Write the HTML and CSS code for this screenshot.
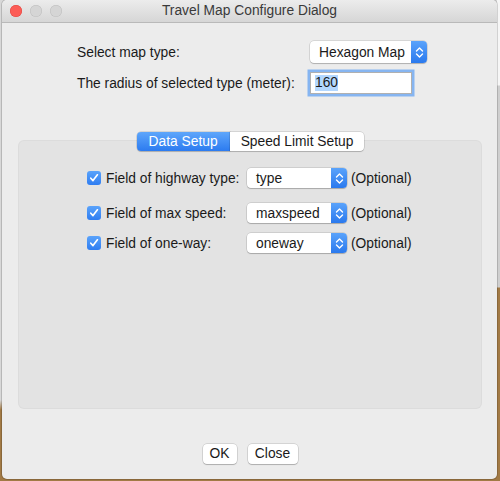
FILE: index.html
```html
<!DOCTYPE html>
<html>
<head>
<meta charset="utf-8">
<link rel="stylesheet" href="styles.css">
</head>
<body>
<div class="desk">
  <div class="window">
    <div class="titlebar">
      <div class="lights">
        <span class="light red"></span>
        <span class="light"></span>
        <span class="light"></span>
      </div>
      <div class="title">Travel Map Configure Dialog</div>
    </div>
    <div class="content">
      <div class="form">
        <div class="label">Select map type:</div>
        <div class="popup popup-map">
          <span class="popup-text">Hexagon Map</span>
          <span class="popup-arrow"><svg width="9" height="13" viewBox="0 0 9 13"><path d="M1.5 5 L4.5 2 L7.5 5 M1.5 8 L4.5 11 L7.5 8" fill="none" stroke="#fff" stroke-width="1.4" stroke-linecap="round" stroke-linejoin="round"/></svg></span>
        </div>
        <div class="label">The radius of selected type (meter):</div>
        <div class="input"><span class="sel">160</span></div>
      </div>

      <div class="tabarea">
        <div class="tabs">
          <div class="tab active">Data Setup</div>
          <div class="tab">Speed Limit Setup</div>
        </div>
        <div class="panel">
          <div class="row r1">
            <div class="check"><span class="box"><svg width="10" height="10" viewBox="0 0 10 10"><path d="M1.8 5.2 L4 7.6 L8.4 1.8" fill="none" stroke="#fff" stroke-width="1.7" stroke-linecap="round" stroke-linejoin="round"/></svg></span>Field of highway type:</div>
            <div class="popup popup-field">
              <span class="popup-text">type</span>
              <span class="popup-arrow"><svg width="9" height="13" viewBox="0 0 9 13"><path d="M1.5 5 L4.5 2 L7.5 5 M1.5 8 L4.5 11 L7.5 8" fill="none" stroke="#fff" stroke-width="1.4" stroke-linecap="round" stroke-linejoin="round"/></svg></span>
            </div>
            <div class="opt">(Optional)</div>
          </div>
          <div class="row r2">
            <div class="check"><span class="box"><svg width="10" height="10" viewBox="0 0 10 10"><path d="M1.8 5.2 L4 7.6 L8.4 1.8" fill="none" stroke="#fff" stroke-width="1.7" stroke-linecap="round" stroke-linejoin="round"/></svg></span>Field of max speed:</div>
            <div class="popup popup-field">
              <span class="popup-text">maxspeed</span>
              <span class="popup-arrow"><svg width="9" height="13" viewBox="0 0 9 13"><path d="M1.5 5 L4.5 2 L7.5 5 M1.5 8 L4.5 11 L7.5 8" fill="none" stroke="#fff" stroke-width="1.4" stroke-linecap="round" stroke-linejoin="round"/></svg></span>
            </div>
            <div class="opt">(Optional)</div>
          </div>
          <div class="row r3">
            <div class="check"><span class="box"><svg width="10" height="10" viewBox="0 0 10 10"><path d="M1.8 5.2 L4 7.6 L8.4 1.8" fill="none" stroke="#fff" stroke-width="1.7" stroke-linecap="round" stroke-linejoin="round"/></svg></span>Field of one-way:</div>
            <div class="popup popup-field">
              <span class="popup-text">oneway</span>
              <span class="popup-arrow"><svg width="9" height="13" viewBox="0 0 9 13"><path d="M1.5 5 L4.5 2 L7.5 5 M1.5 8 L4.5 11 L7.5 8" fill="none" stroke="#fff" stroke-width="1.4" stroke-linecap="round" stroke-linejoin="round"/></svg></span>
            </div>
            <div class="opt">(Optional)</div>
          </div>
        </div>
      </div>

      <div class="buttons">
        <div class="btn btn-ok">OK</div>
        <div class="btn btn-close">Close</div>
      </div>
    </div>
  </div>
</div>
</body>
</html>
```

FILE: styles.css
```css
html, body {
  margin: 0;
  padding: 0;
}
body {
  width: 500px;
  height: 481px;
  overflow: hidden;
  background:
    linear-gradient(to bottom, #f6f6f6 0px, #f6f6f6 85px, #cfcfcf 86px, #cfcfcf 287px, #a27a45 288px) right top / 3px 100% no-repeat,
    linear-gradient(to bottom, #d8d8d8 0px, #d8d8d8 400px, #a27a45 410px, #a27a45 481px);
  font-family: "Liberation Sans", Arial, sans-serif;
  font-size: 13.8px;
  color: #1a1a1a;
}
.desk {
  padding-left: 2px;
}
.window {
  width: 495px;
  height: 479px;
  background: #ececec;
  border-radius: 5px;
  overflow: hidden;
  display: flex;
  flex-direction: column;
  box-shadow: 0 0 0 1px rgba(0,0,0,0.15);
}
.titlebar {
  height: 22px;
  flex: none;
  background: linear-gradient(to bottom, #ececec, #d6d6d6);
  border-bottom: 1px solid #b9b9b9;
  display: flex;
  align-items: center;
  position: relative;
}
.lights {
  display: flex;
  gap: 8px;
  padding-left: 8px;
}
.light {
  width: 12px;
  height: 12px;
  border-radius: 50%;
  background: #d5d5d5;
  box-shadow: inset 0 0 0 0.5px #bdbdbd;
}
.light.red {
  background: #fc5c56;
  box-shadow: inset 0 0 0 0.5px #e0443e;
}
.title {
  position: absolute;
  left: 0;
  right: 0;
  text-align: center;
  font-size: 13.8px;
  color: #3a3a3a;
  top: 3px;
}
.content {
  flex: 1;
  display: flex;
  flex-direction: column;
}
.form {
  display: grid;
  grid-template-columns: 231px auto;
  row-gap: 9px;
  align-items: center;
  padding: 18px 0 0 75px;
}
.popup {
  height: 20px;
  background: #fff;
  border-radius: 4px;
  box-shadow: 0 0 0 0.5px rgba(0,0,0,0.18), 0 1px 1px rgba(0,0,0,0.18);
  display: flex;
  align-items: center;
  overflow: hidden;
}
.popup-text {
  flex: 1;
  padding-left: 9px;
}
.popup-arrow {
  width: 16px;
  align-self: stretch;
  background: linear-gradient(to bottom, #5aa3fb, #2a79ee);
  display: flex;
  align-items: center;
  justify-content: center;
}
.popup-map {
  width: 117px;
  height: 22px;
  margin-left: 2px;
}
.input {
  margin-left: 2px;
  background: #fff;
  border: 1px solid #b0b0b0;
  box-shadow: 0 0 0 2.5px #86b5f1;
  display: flex;
  align-items: center;
  padding-left: 4px;
  box-sizing: border-box;
  width: 102px;
  height: 22px;
}
.sel {
  background: #b3d7ff;
  line-height: 16px;
}
.tabarea {
  position: relative;
  margin: 38px 16px 0 17px;
  padding-top: 9px;
}
.tabs {
  position: absolute;
  top: 0;
  left: 0;
  right: 0;
  display: flex;
  justify-content: center;
  padding-left: 1px;
}
.tab {
  height: 19px;
  line-height: 19px;
  padding: 0 11px;
  background: #fff;
  box-shadow: 0 0 0 0.5px rgba(0,0,0,0.2), 0 1px 1px rgba(0,0,0,0.15);
}
.tab:first-child {
  border-radius: 4px 0 0 4px;
}
.tab:last-child {
  border-radius: 0 4px 4px 0;
}
.tab.active {
  background: linear-gradient(to bottom, #5ea6fb, #2c7bf0);
  color: #fff;
  padding: 0 12px;
}
.panel {
  height: 267px;
  background: #e3e3e3;
  border-radius: 5px;
  box-shadow: 0 0 0 1px #dcdcdc;
  box-sizing: border-box;
  padding: 27px 0 0 68px;
}
.row {
  display: flex;
  align-items: center;
  height: 20px;
}
.r2 {
  margin-top: 15px;
}
.r3 {
  margin-top: 10px;
}
.check {
  width: 160px;
  display: flex;
  align-items: center;
}
.box {
  width: 14px;
  height: 14px;
  border-radius: 3px;
  background: linear-gradient(to bottom, #5aa3fb, #2f7df1);
  display: inline-flex;
  align-items: center;
  justify-content: center;
  margin-right: 5px;
}
.popup-field {
  width: 100px;
}
.opt {
  margin-left: 4px;
}
.buttons {
  display: flex;
  justify-content: center;
  gap: 11px;
  margin-top: 36px;
  padding-left: 1px;
}
.btn {
  height: 20px;
  line-height: 20px;
  background: #fff;
  border-radius: 4px;
  box-shadow: 0 0 0 0.5px rgba(0,0,0,0.2), 0 1px 1px rgba(0,0,0,0.18);
  text-align: center;
}
.btn-ok {
  width: 34px;
}
.btn-close {
  width: 50px;
}
```
